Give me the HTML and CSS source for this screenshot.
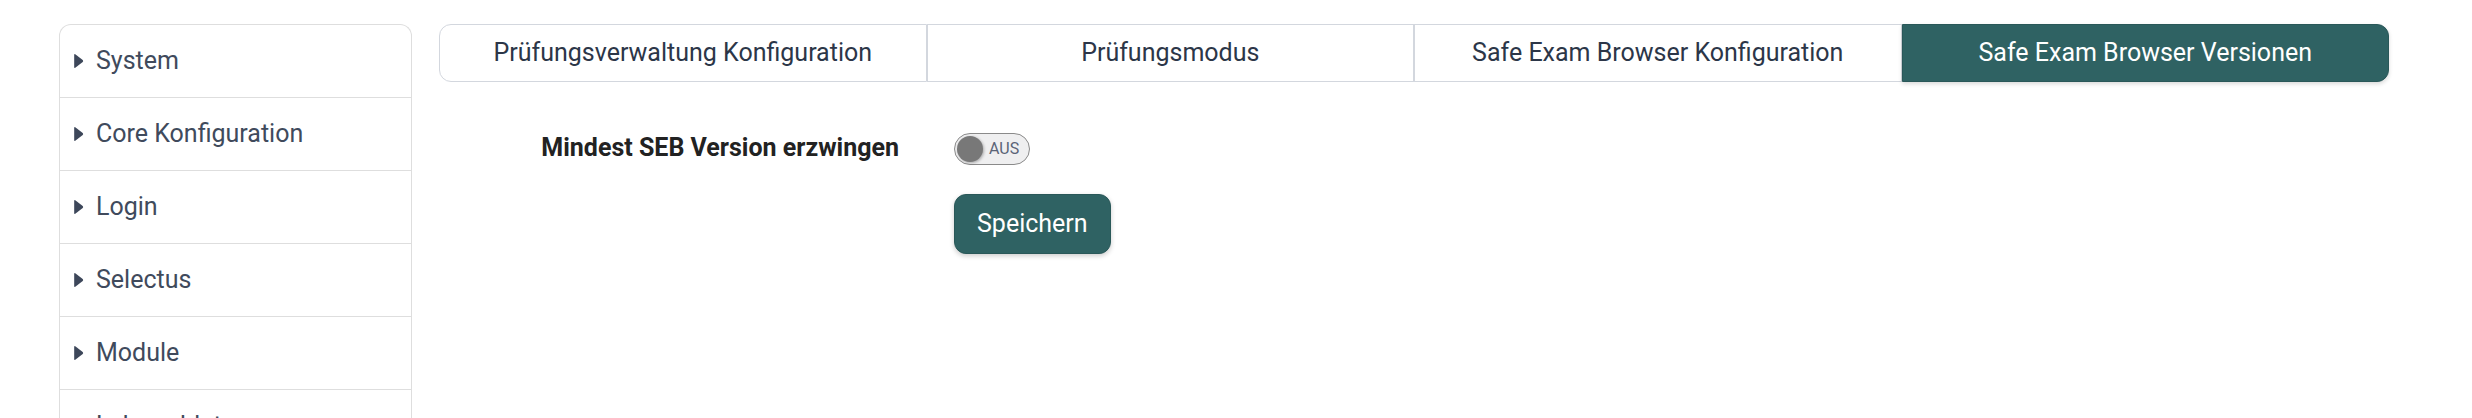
FILE: index.html
```html
<!DOCTYPE html>
<html lang="de">
<head>
  <meta charset="UTF-8">
  <title>Einstellungen</title>
  <link rel="stylesheet" href="styles.css">
</head>
<body>

  <div class="layout">
    <aside class="sidebar">
      <div class="nav-item"><svg class="caret" viewBox="0 0 9 15"><path d="M1 1.2 L8 6.6 Q8.8 7.5 8 8.4 L1 13.8 Q0 14.4 0 13.2 L0 1.8 Q0 0.6 1 1.2 Z"/></svg>System</div>
      <div class="nav-item"><svg class="caret" viewBox="0 0 9 15"><path d="M1 1.2 L8 6.6 Q8.8 7.5 8 8.4 L1 13.8 Q0 14.4 0 13.2 L0 1.8 Q0 0.6 1 1.2 Z"/></svg>Core Konfiguration</div>
      <div class="nav-item"><svg class="caret" viewBox="0 0 9 15"><path d="M1 1.2 L8 6.6 Q8.8 7.5 8 8.4 L1 13.8 Q0 14.4 0 13.2 L0 1.8 Q0 0.6 1 1.2 Z"/></svg>Login</div>
      <div class="nav-item"><svg class="caret" viewBox="0 0 9 15"><path d="M1 1.2 L8 6.6 Q8.8 7.5 8 8.4 L1 13.8 Q0 14.4 0 13.2 L0 1.8 Q0 0.6 1 1.2 Z"/></svg>Selectus</div>
      <div class="nav-item"><svg class="caret" viewBox="0 0 9 15"><path d="M1 1.2 L8 6.6 Q8.8 7.5 8 8.4 L1 13.8 Q0 14.4 0 13.2 L0 1.8 Q0 0.6 1 1.2 Z"/></svg>Module</div>
      <div class="nav-item"><svg class="caret" viewBox="0 0 9 15"><path d="M1 1.2 L8 6.6 Q8.8 7.5 8 8.4 L1 13.8 Q0 14.4 0 13.2 L0 1.8 Q0 0.6 1 1.2 Z"/></svg>Lehrenddaten</div>
    </aside>

    <main class="content">
      <div class="tabs">
        <button class="tab">Prüfungsverwaltung Konfiguration</button>
        <button class="tab">Prüfungsmodus</button>
        <button class="tab">Safe Exam Browser Konfiguration</button>
        <button class="tab active">Safe Exam Browser Versionen</button>
      </div>

      <form class="settings">
        <label class="field-label">Mindest SEB Version erzwingen</label>
        <div class="field">
          <span class="toggle"><span class="knob"></span><span class="toggle-text">AUS</span></span>
        </div>
        <div></div>
        <div class="field">
          <button type="button" class="save">Speichern</button>
        </div>
      </form>
    </main>
  </div>

</body>
</html>
```

FILE: styles.css
```css
body {
  margin: 0;
  background: #fff;
  font-family: Roboto, "Liberation Sans", sans-serif;
  font-size: 25px;
  line-height: 36px;
  overflow: hidden;
}

.layout {
  display: grid;
  grid-template-columns: 353px 1fr;
  gap: 27px;
  padding: 24px 83px 0 59px;
}

.sidebar {
  border: 1px solid #dedede;
  border-bottom: none;
  border-radius: 12px 12px 0 0;
  height: 400px;
  overflow: hidden;
}

.nav-item {
  display: flex;
  align-items: center;
  height: 72px;
  padding: 0 14px;
  border-bottom: 1px solid #dedede;
  color: #404a5c;
}

.caret {
  width: 10px;
  height: 16px;
  margin-right: 12px;
  fill: #3d475a;
}

.tabs {
  display: flex;
}

.tab {
  flex: 1;
  font-family: inherit;
  font-size: 25px;
  line-height: 36px;
  padding: 10px 12px;
  background: #fff;
  color: #2c3648;
  border: 1px solid #d3d7de;
  cursor: pointer;
}

.tab:first-child {
  border-radius: 12px 0 0 12px;
}

.tab:last-child {
  border-radius: 0 12px 12px 0;
}

.tab.active {
  background: #2f6263;
  border-color: #2a5859;
  color: #fff;
  box-shadow: 0 2px 4px rgba(0,0,0,0.15);
}

.settings {
  display: grid;
  grid-template-columns: 460px 1fr;
  column-gap: 55px;
  row-gap: 28px;
  margin-top: 48px;
  align-items: center;
}

.field-label {
  text-align: right;
  font-weight: bold;
  color: #222;
}

.toggle {
  display: inline-flex;
  align-items: center;
  box-sizing: border-box;
  width: 76px;
  height: 32px;
  padding: 0 2px;
  border: 1px solid #8a8a8a;
  border-radius: 16px;
  background: #efeff0;
  vertical-align: middle;
}

.knob {
  width: 26px;
  height: 26px;
  border-radius: 50%;
  background: #787878;
  box-shadow: 1px 1px 3px rgba(0,0,0,0.3);
}

.toggle-text {
  margin-left: 6px;
  font-size: 16px;
  line-height: 20px;
  color: #5b6477;
}

.save {
  font-family: inherit;
  font-size: 25px;
  line-height: 36px;
  padding: 11px 22px;
  background: #2f6263;
  color: #fff;
  border: 1px solid #2a5859;
  border-radius: 12px;
  box-shadow: 0 2px 5px rgba(0,0,0,0.2);
  cursor: pointer;
}
```
